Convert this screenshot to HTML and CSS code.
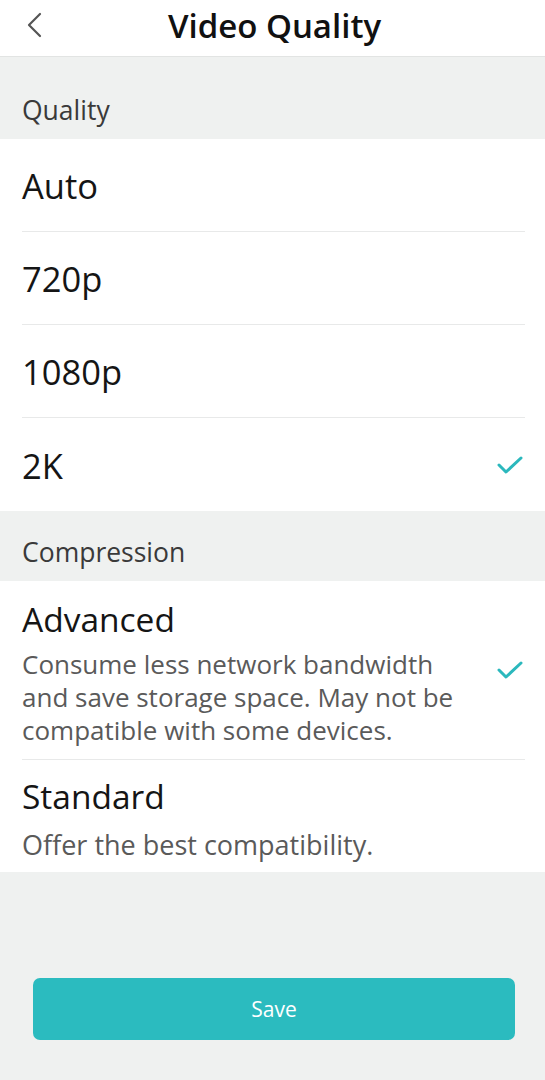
FILE: index.html
```html
<!DOCTYPE html>
<html>
<head>
<meta charset="utf-8">
<link rel="stylesheet" href="styles.css">
</head>
<body>
<div class="page">
  <header class="topbar">
    <span class="back">
      <svg width="16" height="26" viewBox="0 0 16 26"><path d="M14 2 L3 13 L14 24" fill="none" stroke="#555" stroke-width="2.2" stroke-linecap="round" stroke-linejoin="round"/></svg>
    </span>
    <h1 class="title">Video Quality</h1>
  </header>

  <div class="section-head quality-head">Quality</div>
  <div class="list">
    <div class="row"><span class="label">Auto</span></div>
    <div class="row"><span class="label">720p</span></div>
    <div class="row"><span class="label">1080p</span></div>
    <div class="row last"><span class="label">2K</span>
      <svg class="check" width="26" height="20" viewBox="0 0 26 20"><path d="M2 10 L9 17 L24 3" fill="none" stroke="#2bb8bd" stroke-width="3" stroke-linecap="round" stroke-linejoin="round"/></svg>
    </div>
  </div>

  <div class="section-head comp-head">Compression</div>
  <div class="list">
    <div class="opt">
      <div class="opt-title">Advanced</div>
      <div class="opt-body">
        <p class="desc">Consume less network bandwidth and save storage space. May not be compatible with some devices.</p>
        <svg class="check" width="26" height="20" viewBox="0 0 26 20"><path d="M2 10 L9 17 L24 3" fill="none" stroke="#2bb8bd" stroke-width="3" stroke-linecap="round" stroke-linejoin="round"/></svg>
      </div>
    </div>
    <div class="opt last">
      <div class="opt-title">Standard</div>
      <div class="opt-body">
        <p class="desc">Offer the best compatibility.</p>
      </div>
    </div>
  </div>

  <div class="footer">
    <button class="save">Save</button>
  </div>
</div>
</body>
</html>
```

FILE: styles.css
```css
* { box-sizing: border-box; }
html, body { margin: 0; padding: 0; }
body {
  font-family: "Open Sans", "Noto Sans", sans-serif;
  background: #eff1f0;
  width: 545px;
  height: 1080px;
  overflow: hidden;
}
.page { display: flex; flex-direction: column; height: 1080px; }
.topbar {
  height: 57px;
  background: #fff;
  border-bottom: 1px solid #e2e4e3;
  display: flex;
  align-items: center;
  justify-content: center;
  position: relative;
}
.back { position: absolute; left: 26px; top: 12px; }
.back svg { display: block; }
.title {
  margin: 0;
  font-size: 33px;
  font-weight: 600;
  line-height: 40px;
  color: #111;
  position: relative;
  top: -2px;
  left: 2px;
}
.section-head {
  padding-left: 22px;
  font-size: 26.5px;
  color: #3a3a3a;
  display: flex;
  align-items: center;
}
.quality-head { height: 82px; padding-top: 24px; }
.comp-head { height: 70px; padding-top: 12px; }
.list { background: #fff; padding: 0 20px 0 22px; }
.row {
  height: 93px;
  display: flex;
  align-items: center;
  justify-content: space-between;
  border-bottom: 1px solid #e8e9e9;
}
.row.last { border-bottom: none; }
.label { font-size: 34.5px; line-height: 44px; color: #151515; position: relative; top: 1px; }
.check { display: block; margin-right: 2px; }
.opt { border-bottom: 1px solid #e8e9e9; padding: 18px 0 12px; }
.opt.last { border-bottom: none; padding: 16px 0 11px; }
.opt-title { font-size: 33.5px; color: #151515; line-height: 40px; }
.opt-body { display: flex; align-items: flex-start; justify-content: space-between; }
.opt-body .check { margin-top: 21px; }
.desc {
  margin: 9px 0 0;
  font-size: 26px;
  line-height: 33px;
  color: #5a5a5a;
  width: 450px;
}
.opt.last .desc { margin-top: 12px; font-size: 27px; }
.footer { flex: 1; display: flex; align-items: flex-end; padding: 0 30px 40px 33px; }
.save {
  width: 482px;
  height: 62px;
  border: none;
  border-radius: 7px;
  background: #2bbbbf;
  color: #fff;
  font-family: "Open Sans", "Noto Sans", sans-serif;
  font-size: 21px;
}
```
